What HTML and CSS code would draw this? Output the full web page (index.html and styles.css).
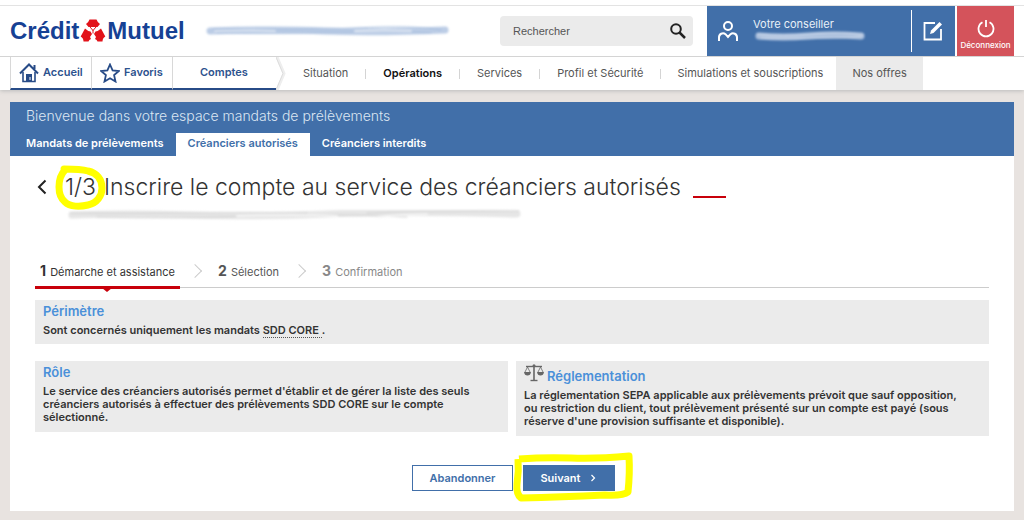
FILE: index.html
```html
<!DOCTYPE html>
<html lang="fr">
<head>
<meta charset="utf-8">
<title>Crédit Mutuel - Créanciers autorisés</title>
<link rel="stylesheet" href="styles.css">
</head>
<body>
<header class="site-header">
  <div class="topbar">
    <a class="logo" href="#"><span>Crédit</span><svg class="logo-mark" viewBox="0 0 26 24" aria-hidden="true"><g fill="#e2131a"><path d="M9.500.5h7q1 3 3.500 4.500L17.500 8h-9L6 5Q8.500 3.500 9.500.5z"/><path d="M5 9.500q2.500 2.500 5.500 3L12 15l-2 3 1 2q-2 .500-2.500 2.500h-5Q3.500 19 .7 17.500z"/><path d="M21 9.500q-2.500 2.500-5.500 3L14 15l2 3-1 2q2 .500 2.500 2.500h5q0-3.500 2.800-5z"/></g><path d="M10 8l3 3.500L16 8M13 11v3.500" fill="none" stroke="#e2131a"/></svg><span>Mutuel</span></a>
    <svg class="account-mask" viewBox="0 0 246 12" preserveAspectRatio="none" aria-hidden="true"><g fill="none" stroke-linecap="round"><path d="M5 6Q70 4 120 6T240 5" stroke="#bccde6" stroke-width="7"/><path d="M8 4Q90 6 150 3T236 5M12 8Q80 9 130 7T226 8" stroke="#a4bcdd"/><path d="M10 6Q40 5 70 6M150 6Q180 5 206 6" stroke="#dfe7f3" stroke-width="2"/></g></svg>
    <form class="search">
      <input class="search-input" type="search" placeholder="Rechercher" aria-label="Rechercher">
      <button class="search-button" type="button" aria-label="Lancer la recherche"><svg viewBox="0 0 18 18"><g fill="none" stroke="#222"><circle cx="7" cy="7" r="4.800" stroke-width="2"/><path d="M10.500 10.500L16 16" stroke-width="2.500"/></g></svg></button>
    </form>
    <div class="advisor">
      <a class="advisor-link" href="#">
        <svg class="advisor-icon" viewBox="0 0 22 22" aria-hidden="true"><g fill="none" stroke="#fff" stroke-width="2"><circle cx="11" cy="6" r="4"/><path d="M2 21v-3.500a4 4 0 0 1 6.500-3.300L11 17l2.500-2.800A4 4 0 0 1 20 17.500V21"/></g></svg>
        <span class="advisor-text">Votre conseiller
          <svg class="advisor-mask" viewBox="0 0 114 10" aria-hidden="true"><g fill="none" stroke-linecap="round"><path d="M6 5Q30 7 55 5T108 5" stroke="#abc0dd" stroke-width="7"/><path d="M4 3Q30 6 60 3T110 4M8 7Q50 8 108 6" stroke="#d5dfee"/></g></svg>
        </span>
      </a>
      <a class="write-link" href="#" aria-label="Écrire"><svg viewBox="0 0 20 20"><path d="M12 2H1.500v16.500H18V8" fill="none" stroke="#fff" stroke-width="1.800"/><path d="M7 13l1-3.500L16.500 1l2.500 2.500L10.500 12z" fill="#fff"/></svg></a>
    </div>
    <a class="logout" href="#"><svg viewBox="0 0 18 18" aria-hidden="true"><path d="M5.500 2.200a7.500 7.500 0 1 0 7 0M9 0v7" fill="none" stroke="#fff" stroke-width="1.800"/></svg>Déconnexion</a>
  </div>
  <nav class="nav">
    <a class="nav-main" href="#"><svg viewBox="0 0 20 20" aria-hidden="true"><g fill="none" stroke="#274b87"><path d="M1 10.500L10 1.500l9 9M15.500 6V2" stroke-width="2"/><path d="M4 9v9.500h12V9" stroke-width="1.600"/></g><path d="M7 11h6v8H7z" fill="#274b87"/><path d="M11 14v3" stroke="#fff"/></svg>Accueil</a>
    <a class="nav-main" href="#"><svg viewBox="0 0 20 20" aria-hidden="true"><path d="M10 1.500l2.600 5.800 6.200.7-4.700 4.100 1.400 6.400-5.500-3.300-5.500 3.300 1.400-6.400L1.200 8l6.200-.7z" fill="none" stroke="#274b87" stroke-width="1.800"/></svg>Favoris</a>
    <a class="nav-main nav-current" href="#">Comptes</a>
    <svg class="nav-arrow" viewBox="0 0 10 33" aria-hidden="true"><path d="M1 0l7 16.500L1 33" fill="none" stroke="#eee" stroke-width="3"/><path d="M0 0l7 16.500L0 33" fill="none" stroke="#ddd"/></svg>
    <a class="nav-item" href="#">Situation</a>
    <a class="nav-item nav-active" href="#">Opérations</a>
    <a class="nav-item" href="#">Services</a>
    <a class="nav-item" href="#">Profil et Sécurité</a>
    <a class="nav-item nav-last" href="#">Simulations et souscriptions</a>
    <a class="nav-offers" href="#">Nos offres</a>
  </nav>
</header>
<main class="panel">
  <div class="banner">
    <p class="banner-title">Bienvenue dans votre espace mandats de prélèvements</p>
    <nav class="tabs">
      <a class="tab" href="#">Mandats de prélèvements</a>
      <a class="tab tab-current" href="#">Créanciers autorisés</a>
      <a class="tab" href="#">Créanciers interdits</a>
    </nav>
  </div>
  <div class="content">
    <div class="heading">
      <a class="back" href="#" aria-label="Retour"><svg viewBox="0 0 10 16"><path d="M8.500 1.500L2 8l6.500 6.500" fill="none" stroke="#222" stroke-width="2"/></svg></a>
      <h1 class="title"><span class="count">1/3<svg class="count-ring" viewBox="0 0 54 46" aria-hidden="true"><path d="M11 5C7 9 5 15 5 22c0 6 1 11 6 15 5 5 15 5 23 3 9-2 14-9 14-17 0-9-5-15-14-17-7-2-16-2-24-2" fill="none" stroke="#ff0" stroke-width="7" stroke-linecap="round"/></svg></span><span>Inscrire le compte au service des créanciers autorisés</span></h1>
      <span class="title-mark"></span>
    </div>
    <svg class="title-mask" viewBox="0 0 456 10" preserveAspectRatio="none" aria-hidden="true"><g fill="none" stroke-linecap="round"><path d="M5 5Q60 3 120 5T260 4T450 4" stroke="#e6e6e6" stroke-width="7"/><path d="M3 3Q60 4 120 3T240 3M300 3Q370 1 452 1M30 7Q100 9 180 6T340 7" stroke="#d2d2d2"/><path d="M170 6Q230 4 270 6M310 7Q340 4 360 4" stroke="#f5f5f5" stroke-width="2"/></g></svg>
    <ol class="steps">
      <li class="step step-current"><b>1</b> Démarche et assistance</li>
      <li class="step"><b>2</b> Sélection</li>
      <li class="step step-last"><b>3</b> Confirmation</li>
    </ol>
    <section class="card">
      <h2>Périmètre</h2>
      <p>Sont concernés uniquement les mandats <abbr>SDD CORE </abbr> .</p>
    </section>
    <div class="columns">
      <section class="card">
        <h2>Rôle</h2>
        <p>Le service des créanciers autorisés permet d'établir et de gérer la liste des seuls créanciers autorisés à effectuer des prélèvements SDD CORE sur le compte sélectionné.</p>
      </section>
      <section class="card">
        <h2 class="rules"><svg viewBox="0 0 20 18" aria-hidden="true"><g fill="none" stroke="#666"><path d="M2 2.500h16" stroke-width="1.400"/><path d="M10 1v15" stroke-width="1.600"/><path d="M6.500 16.500h7" stroke-width="1.400"/><path d="M3.500 3L1 8M3.500 3L6 8M16.500 3L14 8M16.500 3L19 8" stroke-width=".8"/></g><path d="M0 8h7q-.5 3.500-3.500 3.500T0 8zM13 8h7q-.5 3.500-3.500 3.500T13 8z" fill="#666"/><circle cx="10" cy="1.700" r="1.500" fill="#666"/></svg>Réglementation</h2>
        <p>La réglementation SEPA applicable aux prélèvements prévoit que sauf opposition, ou restriction du client, tout prélèvement présenté sur un compte est payé (sous réserve d'une provision suffisante et disponible).</p>
      </section>
    </div>
    <div class="actions">
      <button class="button" type="button">Abandonner</button>
      <span class="next">
        <button class="button button-primary" type="button">Suivant <svg viewBox="0 0 6 8" aria-hidden="true"><path d="M1.500 1l3 3-3 3" fill="none" stroke="#fff" stroke-width="1.200"/></svg></button>
        <svg class="next-ring" viewBox="0 0 124 52" aria-hidden="true"><path d="M8 8Q34 6 60 7T118 5Q119 22 117 41Q112 45 94 44Q50 46 10 47Q5 43 6 33Q8 20 7 8" fill="none" stroke="#ff0" stroke-width="7" stroke-linejoin="round"/></svg>
      </span>
    </div>
  </div>
</main>
</body>
</html>
```

FILE: styles.css
```css
* { box-sizing: border-box; }
body {
  margin: 0;
  background: #e8e3e0;
  color: #333;
  font: 11px/13px Inter, "Liberation Sans", sans-serif;
}
a { color: inherit; text-decoration: none; }
svg { display: block; flex: none; }
button { font: inherit; cursor: pointer; }
h1, h2, p, ol { margin: 0; padding: 0; }

.site-header {
  padding-top: 5px;
  background: #fff;
  box-shadow: 0 1px 4px #bbb;
}
.topbar {
  display: flex;
  align-items: center;
  height: 52px;
  padding: 0 10px;
  border-top: 1px solid #e3e3e3;
  border-bottom: 1px solid #d4d4d4;
}
.logo {
  display: flex;
  align-items: center;
  gap: 1px;
  color: #164194;
  font: bold 24px/28px "Liberation Sans", Arial, sans-serif;
}
.logo-mark { width: 26px; height: 24px; }
.account-mask { width: 246px; height: 12px; margin-left: 20px; filter: blur(1px); }
.search {
  display: flex;
  align-items: center;
  width: 193px;
  height: 30px;
  margin-left: auto;
  padding-right: 6px;
  border-radius: 4px;
  background: #ebebeb;
}
.search-input {
  flex: 1;
  min-width: 0;
  padding: 0 13px;
  border: 0;
  background: none;
  color: #555;
  font: 11px/13px "Liberation Sans", Arial, sans-serif;
}
.search-input::placeholder { color: #555; opacity: 1; }
.search-button { padding: 0; border: 0; background: none; }
.search-button svg { width: 18px; height: 18px; }
.advisor {
  display: flex;
  align-items: center;
  width: 248px;
  height: 50px;
  margin-left: 14px;
  background: #416fa9;
  color: #fff;
}
.advisor-link {
  display: flex;
  flex: 1;
  align-items: center;
  gap: 14px;
  height: 42px;
  padding-left: 10px;
  border-right: 1px solid #fff;
}
.advisor-icon { width: 22px; height: 22px; }
.advisor-text { padding-bottom: 3px; color: #e8eff8; }
.advisor-mask { width: 114px; height: 10px; filter: blur(1px); }
.write-link { padding: 0 12px 0 11px; }
.write-link svg { width: 20px; height: 20px; }
.logout {
  display: flex;
  flex-direction: column;
  align-items: center;
  gap: 2px;
  width: 57px;
  height: 50px;
  margin-left: 2px;
  padding-top: 14px;
  background: #d4535b;
  color: #fff;
  font-size: 8px;
  font-weight: 500;
  line-height: 10px;
}
.logout svg { width: 18px; height: 18px; }

.nav { display: flex; height: 33px; padding: 0 10px; color: #555; }
.nav-main {
  display: flex;
  align-items: center;
  gap: 4px;
  width: 81px;
  padding-left: 8px;
  border-left: 1px solid #d8d8d8;
  border-bottom: 2px solid #274b87;
  color: #2d528e;
  font-weight: 600;
}
.nav-main svg { width: 20px; height: 20px; }
.nav-current { width: 104px; padding-left: 27px; }
.nav-arrow { width: 10px; height: 33px; }
.nav-item { display: flex; align-items: center; padding-left: 17px; }
.nav-item::after {
  width: 1px;
  height: 10px;
  margin-left: 17px;
  background: #d4d4d4;
  content: "";
}
.nav-last { padding: 0 13px 0 16px; }
.nav-last::after { display: none; }
.nav-active { color: #111; font-weight: 600; }
.nav-offers { display: flex; align-items: center; padding: 0 16px; background: #ebebeb; }

.panel { margin: 12px 10px 9px; background: #fff; }
.banner { background: #416fa9; color: #fff; }
.banner-title {
  padding: 4px 16px 7px;
  color: #dce6f2;
  font-size: 14px;
  font-weight: 300;
  line-height: 20px;
}
.tabs { display: flex; padding-left: 4px; font-weight: 600; }
.tab { padding: 4px 12px 6px; }
.tab-current { background: #fff; color: #416fa9; }

.content { padding: 16px 25px 20px; }
.heading { display: flex; align-items: center; height: 30px; }
.back { padding: 0 18px 0 2px; }
.back svg { width: 10px; height: 16px; }
.title { display: flex; gap: 8px; font-size: 23px; font-weight: 300; line-height: 30px; }
.count { position: relative; }
.count-ring { position: absolute; top: -7px; left: -11px; width: 54px; height: 46px; }
.title-mark { align-self: flex-end; width: 33px; height: 2px; margin: 0 0 4px 12px; background: #c8000a; }
.title-mask { width: 456px; height: 10px; margin: 8px 0 0 32px; filter: blur(1px); }

.steps {
  display: flex;
  height: 30px;
  margin-top: 38px;
  border-bottom: 1px solid #ccc;
  list-style: none;
}
.step {
  position: relative;
  height: 31px;
  padding: 6px 5px 0 38px;
  color: #555;
}
.step b { margin-right: 1px; font-size: 14px; font-weight: 700; }
.step + .step::before {
  position: absolute;
  top: 8px;
  left: 10px;
  width: 9px;
  height: 9px;
  border: solid #ccc;
  border-width: 1px 1px 0 0;
  content: "";
  transform: rotate(45deg);
}
.step-current { padding-left: 5px; border-bottom: 3px solid #c8000a; color: #333; }
.step-current::after {
  position: absolute;
  top: 30px;
  left: 67px;
  border: solid transparent;
  border-width: 4px 5px 0;
  border-top-color: #c8000a;
  content: "";
}
.step-last { color: #888; }

.card { padding: 3px 8px 7px; background: #ebebeb; font-weight: 600; }
.card h2 {
  margin-bottom: 5px;
  color: #4a90d9;
  font-size: 13px;
  font-weight: 600;
  line-height: 16px;
}
.card abbr { border-bottom: 1px dotted #555; }
.steps + .card { margin-top: 12px; }
.columns {
  display: grid;
  grid-template-columns: 1fr 1fr;
  gap: 8px;
  align-items: start;
  margin-top: 17px;
}
.columns .card { padding: 3px 24px 8px 8px; }
.card .rules { display: flex; align-items: flex-end; gap: 3px; height: 20px; }
.rules svg { width: 20px; height: 18px; align-self: flex-start; }

.actions { display: flex; justify-content: center; gap: 10px; margin-top: 29px; padding-left: 2px; }
.button {
  height: 26px;
  padding: 0 17px;
  border: 1px solid #416fa9;
  background: #fff;
  color: #416fa9;
  font-weight: 600;
}
.button-primary { display: flex; align-items: center; gap: 9px; padding: 0 18px 0 16px; background: #416fa9; color: #fff; }
.button-primary svg { width: 6px; height: 8px; }
.next { position: relative; }
.next-ring { position: absolute; top: -14px; left: -12px; width: 124px; height: 52px; pointer-events: none; }
```
